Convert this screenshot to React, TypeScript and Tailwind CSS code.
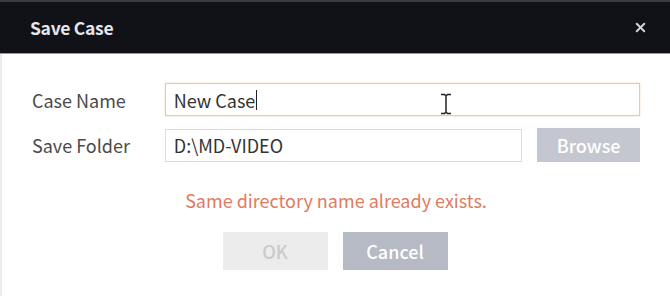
import { X } from 'lucide-react';

const FONT = '"Noto Sans CJK KR", "Noto Sans", sans-serif';

function IBeam() {
  return (
    <svg width="12" height="22" viewBox="0 0 12 22" className="pointer-events-none absolute left-[440px] top-[93px]">
      <path d="M1 1.5h3.5L6 3l1.5-1.5H11M1 20.5h3.5L6 19l1.5 1.5H11M6 3v16" fill="none" stroke="#fff" strokeWidth="3" />
      <path d="M1 1.5h3.5L6 3l1.5-1.5H11M1 20.5h3.5L6 19l1.5 1.5H11M6 3v16" fill="none" stroke="#222" strokeWidth="1.5" />
    </svg>
  );
}

export default function App() {
  return (
    <div className="relative flex h-[296px] w-[670px] flex-col overflow-hidden bg-white" style={{ fontFamily: FONT }}>
      <div className="flex h-[54px] items-center justify-between border-t-2 border-b border-t-[#3a3a40] border-b-[#9a9a9e] bg-[#111218] pl-[30px] pr-[22px]">
        <span className="text-[17.5px] leading-none font-bold tracking-[-0.3px] text-[#e6e6ea]">Save Case</span>
        <X size={15} strokeWidth={3.2} className="text-[#d4d4d8]" />
      </div>

      <div className="flex flex-1 flex-col border-l-2 border-l-[#ececec] pl-[30px] pr-[30px] pt-[29px]">
        <div className="flex items-center">
          <label className="w-[133px] text-[18px] leading-none text-[#4a4a4a]">Case Name</label>
          <div className="flex h-[33px] w-[476px] items-center border border-[#efc98f] px-[8px] text-[18px] leading-none text-[#333] shadow-[0_0_2px_#f5ddb5]">
            New Case<span className="ml-px inline-block h-[20px] w-px bg-[#222]" />
          </div>
        </div>

        <div className="mt-[12px] flex items-center">
          <label className="w-[133px] text-[18px] leading-none text-[#4a4a4a]">Save Folder</label>
          <div className="flex h-[33px] w-[358px] items-center border border-[#dcdcdc] px-[8px] text-[18px] leading-none text-[#333]">
            D:\MD-VIDEO
          </div>
          <button type="button" className="ml-[15px] h-[34px] w-[103px] bg-[#c4c7d0] text-[18px] leading-none font-medium text-white">
            Browse
          </button>
        </div>

        <div className="mt-[27px] text-center text-[18px] leading-[22px] text-[#e07a60]">
          Same directory name already exists.
        </div>

        <div className="mt-[21px] flex justify-center gap-[15px] pr-[2px]">
          <button type="button" className="h-[38px] w-[105px] bg-[#ececec] text-[18px] leading-none font-medium text-[#cacaca]">OK</button>
          <button type="button" className="h-[38px] w-[105px] bg-[#b6bac5] text-[18px] leading-none font-medium text-white">Cancel</button>
        </div>
      </div>

      <IBeam />
    </div>
  );
}
